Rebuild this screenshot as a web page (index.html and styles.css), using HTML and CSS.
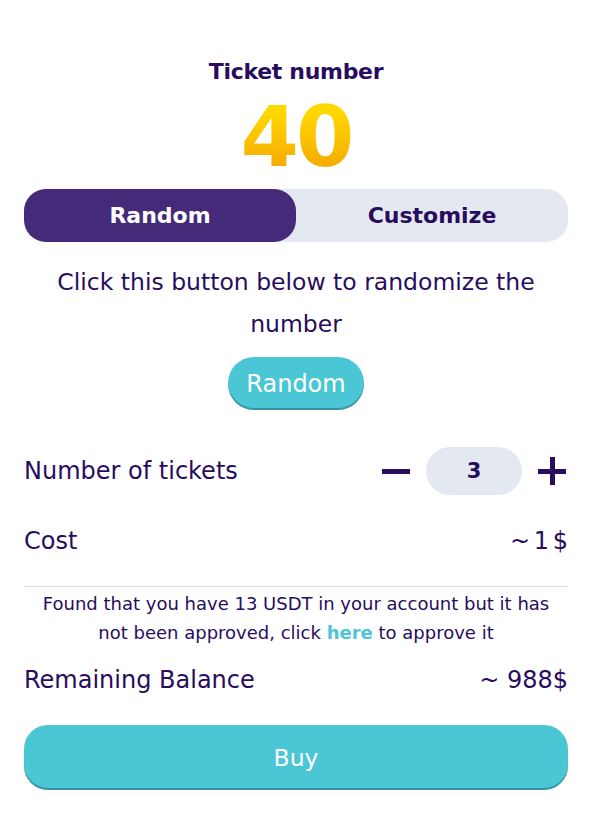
FILE: index.html
```html
<!DOCTYPE html>
<html>
<head>
<meta charset="utf-8">
<link rel="stylesheet" href="styles.css">
</head>
<body>
<div class="card">
  <div class="title">Ticket number</div>
  <div class="number">40</div>
  <div class="toggle">
    <div class="tab active">Random</div>
    <div class="tab">Customize</div>
  </div>
  <p class="hint">Click this button below to randomize the number</p>
  <div class="center"><button class="btn-random">Random</button></div>
  <div class="row tickets">
    <span>Number of tickets</span>
    <div class="stepper">
      <span class="minus"></span>
      <div class="qty">3</div>
      <span class="plus"></span>
    </div>
  </div>
  <div class="row cost">
    <span>Cost</span>
    <span class="tight">~ 1 $</span>
  </div>
  <div class="divider"></div>
  <div class="notice">
    <div>Found that you have 13 USDT in your account but it has</div>
    <div>not been approved, click <a class="link">here</a> to approve it</div>
  </div>
  <div class="row balance">
    <span>Remaining Balance</span>
    <span>~ 988$</span>
  </div>
  <button class="btn-buy">Buy</button>
</div>
</body>
</html>
```
FILE: styles.css
```css
* { box-sizing: border-box; }
body {
  margin: 0;
  background: #fff;
  font-family: "DejaVu Sans", "Noto Sans", sans-serif;
  color: #280d5f;
}
.card {
  padding: 58px 30px 0 24px;
  display: flex;
  flex-direction: column;
}
.title {
  text-align: center;
  font-weight: 700;
  font-size: 22px;
  line-height: 28px;
  letter-spacing: -0.3px;
}
.number {
  text-align: center;
  font-weight: 700;
  font-size: 84px;
  line-height: 103px;
  letter-spacing: -3px;
  background: linear-gradient(180deg, #ffd800 25%, #f7ae00 75%);
  -webkit-background-clip: text;
  background-clip: text;
  color: transparent;
}
.toggle {
  display: flex;
  background: #e4e8f0;
  border-radius: 22px;
  height: 53px;
}
.tab {
  flex: 1;
  display: flex;
  align-items: center;
  justify-content: center;
  font-weight: 700;
  font-size: 22px;
  border-radius: 22px;
  color: #280d5f;
}
.tab.active {
  background: #452a7a;
  color: #fff;
}
.hint {
  margin: 19px 4px 0;
  text-align: center;
  font-size: 23.5px;
  line-height: 42px;
}
.center { display: flex; justify-content: center; margin-top: 12px; }
.btn-random {
  width: 136px;
  height: 53px;
  border: none;
  border-radius: 26px;
  background: #4ac6d4;
  color: #fff;
  font-family: inherit;
  font-size: 24px;
  font-weight: 400;
  padding: 0;
  box-shadow: inset 0 -2px 0 rgba(0,0,0,0.25);
}
.row {
  display: flex;
  justify-content: space-between;
  align-items: center;
  font-size: 24px;
}
.tight { word-spacing: -4px; }
.tickets { margin-top: 37px; height: 48px; }
.stepper { display: flex; align-items: center; gap: 16px; }
.minus {
  width: 28px; height: 5px; background: #280d5f; display: block;
}
.plus {
  width: 28px; height: 28px; display: block; position: relative;
  margin-right: 2px;
}
.plus::before, .plus::after {
  content: ""; position: absolute; background: #280d5f;
}
.plus::before { left: 0; top: 11.5px; width: 28px; height: 5px; }
.plus::after { top: 0; left: 11.5px; width: 5px; height: 28px; }
.qty {
  width: 96px; height: 48px; border-radius: 24px; background: #e4e8f0;
  display: flex; align-items: center; justify-content: center;
  font-weight: 700; font-size: 21px;
}
.cost { margin-top: 26px; height: 40px; }
.divider { height: 1px; background: #d7dbe4; margin-top: 25px; }
.notice {
  margin: 2px 0 0;
  text-align: center;
  font-size: 18px;
  line-height: 29px;
  white-space: nowrap;
}
.link { color: #4ac6d4; font-weight: 700; }
.balance { margin-top: 13px; height: 40px; }
.btn-buy {
  margin-top: 25px;
  height: 65px;
  border: none;
  border-radius: 24px;
  background: #4ac6d4;
  color: #fff;
  font-family: inherit;
  font-size: 23.5px;
  font-weight: 400;
  box-shadow: inset 0 -2px 0 rgba(0,0,0,0.25);
}
```
